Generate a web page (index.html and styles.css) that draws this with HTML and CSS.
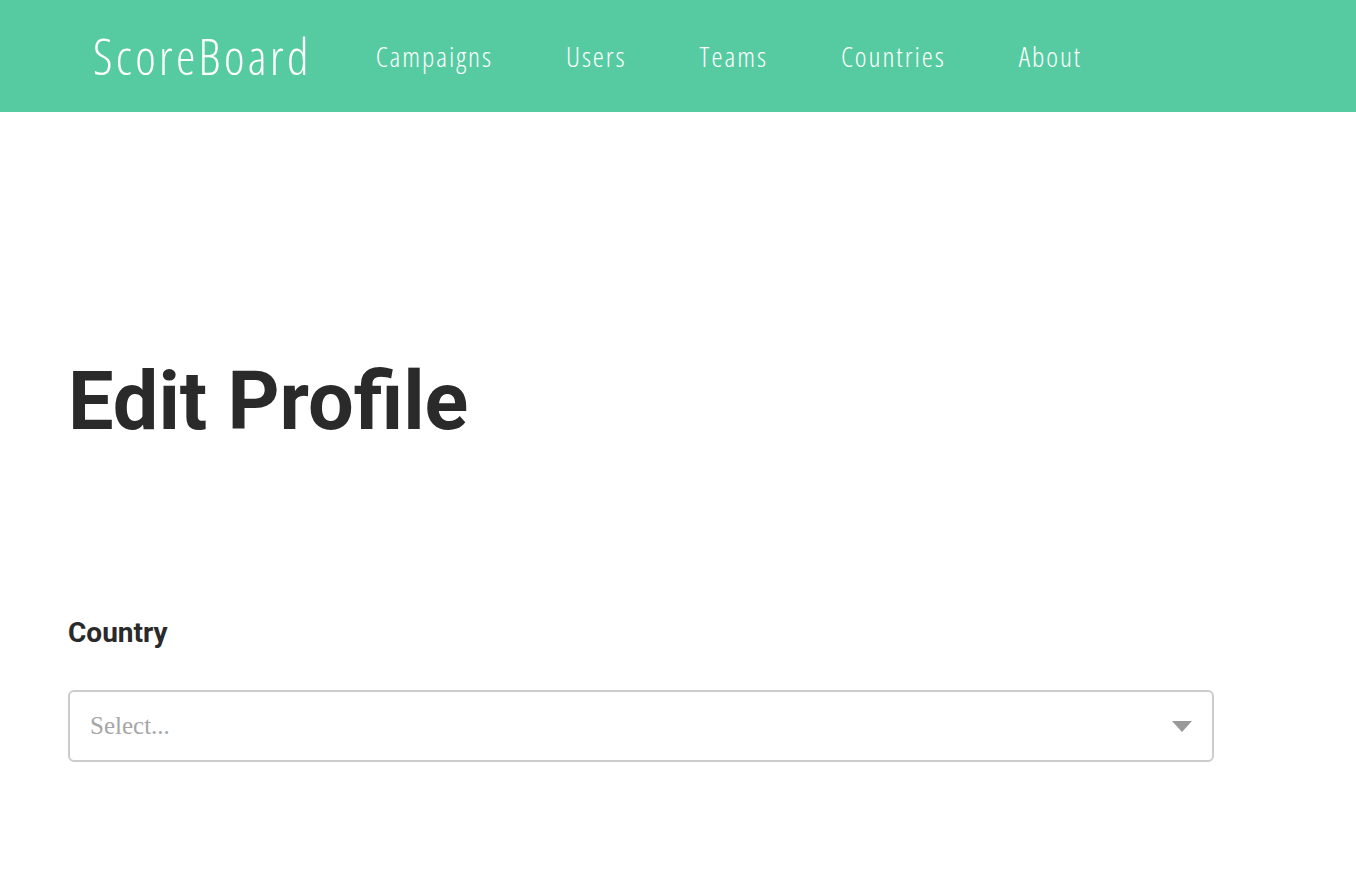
FILE: index.html
```html
<!DOCTYPE html>
<html lang="en">
<head>
<meta charset="utf-8">
<title>ScoreBoard - Edit Profile</title>
<link rel="stylesheet" href="styles.css">
</head>
<body>
<header class="topbar">
  <a class="brand" href="#">ScoreBoard</a>
  <nav class="nav">
    <a class="nav-link" href="#">Campaigns</a>
    <a class="nav-link" href="#">Users</a>
    <a class="nav-link" href="#">Teams</a>
    <a class="nav-link" href="#">Countries</a>
    <a class="nav-link" href="#">About</a>
  </nav>
</header>
<main class="content">
  <h1 class="title">Edit Profile</h1>
  <label class="field-label">Country</label>
  <div class="select">
    <span class="select-placeholder">Select...</span>
    <span class="select-arrow"></span>
  </div>
</main>
</body>
</html>
```
FILE: styles.css
```css
html, body {
  margin: 0;
  padding: 0;
  background: #ffffff;
}

body {
  font-family: Roboto, "Liberation Sans", sans-serif;
  color: #2a2a2a;
}

.topbar {
  height: 112px;
  background: #56cba1;
  display: flex;
  align-items: center;
  padding-left: 93px;
  box-sizing: border-box;
}

.brand {
  font-family: "Open Sans", sans-serif;
  font-stretch: 75%;
  font-weight: 300;
  font-size: 49px;
  letter-spacing: 0.068em;
  color: #ffffff;
  text-decoration: none;
  line-height: 1;
}

.nav {
  display: flex;
  align-items: center;
  margin-left: 64px;
  gap: 73px;
}

.nav-link {
  font-family: "Open Sans", sans-serif;
  font-stretch: 75%;
  font-weight: 300;
  font-size: 28px;
  letter-spacing: 0.07em;
  color: #ffffff;
  text-decoration: none;
  line-height: 1;
}

.content {
  padding: 0 68px;
  display: flex;
  flex-direction: column;
  align-items: flex-start;
}

.title {
  margin: 249px 0 0 0;
  font-size: 81px;
  line-height: 1;
  font-weight: 700;
  color: #2a2a2a;
}

.field-label {
  margin-top: 177px;
  font-size: 28px;
  line-height: 1;
  font-weight: 700;
  color: #2a2a2a;
}

.select {
  margin-top: 43px;
  width: 1146px;
  height: 72px;
  box-sizing: border-box;
  border: 2px solid #cccccc;
  border-radius: 6px;
  display: flex;
  align-items: center;
  justify-content: space-between;
  padding: 0 20px 0 20px;
}

.select-placeholder {
  font-family: "Liberation Serif", serif;
  font-size: 25px;
  color: #a6a6a6;
}

.select-arrow {
  width: 0;
  height: 0;
  border-left: 10px solid transparent;
  border-right: 10px solid transparent;
  border-top: 11px solid #999999;
}
```
